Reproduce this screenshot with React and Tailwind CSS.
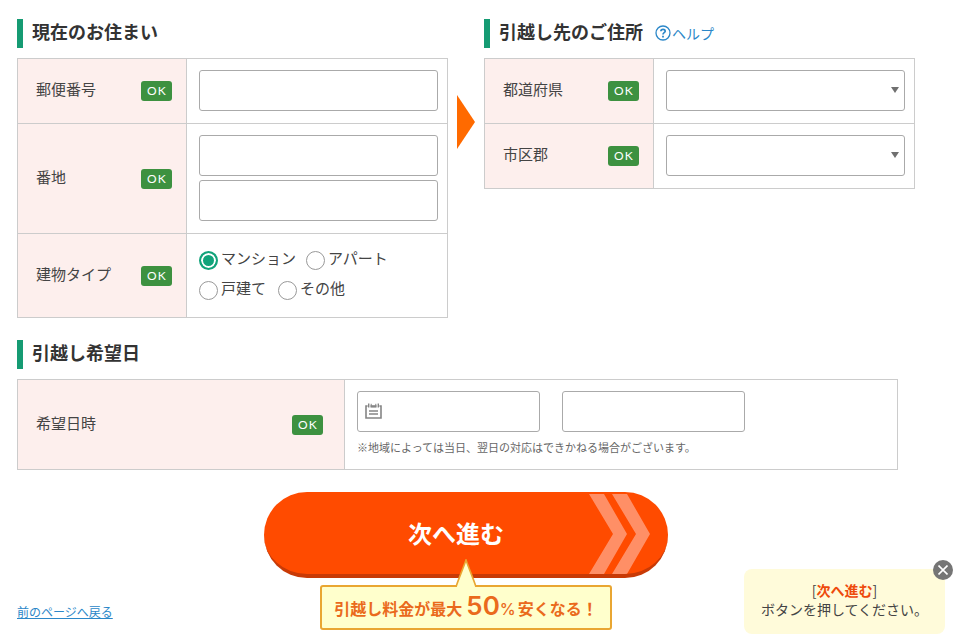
import React from "react";

const field = "block h-[41px] w-full rounded-[3px] border border-[#aaa] bg-white px-2 text-[15px] text-[#444]";

function Heading({ children }) {
  return (
    <h2 className="flex h-[29px] items-center border-l-[6px] border-[#159b73] pb-[6px] pl-[9px] text-[18px] leading-6 font-bold text-[#333]">
      {children}
    </h2>
  );
}

function Badge() {
  return (
    <span className="flex h-5 w-[31px] items-center justify-center rounded-[3px] bg-[#3d9140] pl-px font-['Lato',sans-serif] text-[12px] leading-5 tracking-widest text-white">
      OK
    </span>
  );
}

function Row({ label, htmlFor, wide, children }) {
  const Label = htmlFor ? "label" : "span";
  return (
    <div className="flex border-b border-[#ccc]">
      <div
        className={
          "flex shrink-0 items-center justify-between border-r border-[#ccc] bg-[#fdefed] pl-[18px] " +
          (wide ? "w-[327px] pr-[21px]" : "w-[169px] pr-[14px]")
        }
      >
        <Label htmlFor={htmlFor} className="pb-1 text-[15px] leading-6">
          {label}
        </Label>
        <Badge />
      </div>
      <div className="min-w-0 grow pt-[11px] pr-[9px] pb-3 pl-3">{children}</div>
    </div>
  );
}

function Panel({ children }) {
  return <div className="mt-[10px] border-x border-t border-[#ccc]">{children}</div>;
}

function SelectField({ id }) {
  return (
    <div className="relative">
      <select id={id} className={field + " appearance-none"} defaultValue="">
        <option value=""></option>
      </select>
      <svg className="pointer-events-none absolute top-4 right-[6px] h-[7px] w-2" viewBox="0 0 8 7" aria-hidden="true">
        <path d="M0 1h8L4 7z" fill="#707070" />
      </svg>
    </div>
  );
}

function Radio({ label, checked }) {
  return (
    <label className="flex items-center gap-[3px] text-[15px] leading-[26px]">
      <input
        type="radio"
        name="building"
        defaultChecked={checked}
        className="size-[19px] appearance-none rounded-full border border-[#999] bg-white checked:border-2 checked:border-[#11a37a] checked:bg-[#11a37a] checked:shadow-[inset_0_0_0_2px_white]"
      />
      <span className="pb-1">{label}</span>
    </label>
  );
}

export default function App() {
  return (
    <div className="bg-white font-['Noto_Sans_CJK_JP',sans-serif] text-[#444]">
      <form className="pt-[19px] pr-[52px] pb-[10px] pl-[17px]" onSubmit={(e) => e.preventDefault()}>
        <div className="grid grid-cols-[1fr_36px_1fr]">
          <section>
            <Heading>現在のお住まい</Heading>
            <Panel>
              <Row label="郵便番号" htmlFor="zip">
                <input id="zip" type="text" className={field} />
              </Row>
              <Row label="番地" htmlFor="street">
                <div className="flex flex-col gap-1">
                  <input id="street" type="text" className={field} />
                  <input type="text" aria-label="番地" className={field} />
                </div>
              </Row>
              <Row label="建物タイプ">
                <div className="flex gap-[10px]">
                  <Radio label="マンション" checked />
                  <Radio label="アパート" />
                </div>
                <div className="flex gap-3">
                  <Radio label="戸建て" />
                  <Radio label="その他" />
                </div>
              </Row>
            </Panel>
          </section>
          <svg className="mt-[76px] h-[54px] w-[18px] justify-self-center" viewBox="0 0 18 54" aria-hidden="true">
            <path d="M0 0L18 27L0 54z" fill="#ff6a00" />
          </svg>
          <section>
            <Heading>
              引越し先のご住所
              <a href="#help" className="ml-3 flex items-center gap-px pt-1 text-[14px] leading-5 font-normal text-[#2b87c8]">
                <svg className="size-4" viewBox="0 0 16 16" fill="none" stroke="currentColor" aria-hidden="true">
                  <circle cx="8" cy="8" r="7" strokeWidth="1.3" />
                  <path d="M5.9 6.3C5.9 3.6 10.2 3.7 10.2 6.2C10.2 7.7 8 7.7 8 9.5" strokeWidth="1.7" />
                  <path d="M8 10.8v1.8" strokeWidth="1.8" />
                </svg>
                ヘルプ
              </a>
            </Heading>
            <Panel>
              <Row label="都道府県" htmlFor="pref">
                <SelectField id="pref" />
              </Row>
              <Row label="市区郡" htmlFor="city">
                <SelectField id="city" />
              </Row>
            </Panel>
          </section>
        </div>

        <section className="mt-[22px] mr-[17px]">
          <Heading>引越し希望日</Heading>
          <Panel>
            <Row label="希望日時" htmlFor="date" wide>
              <div className="flex gap-[22px]">
                <div className="relative w-[183px]">
                  <input id="date" type="text" className={field + " pl-8"} />
                  <svg className="pointer-events-none absolute top-3 left-2 h-4 w-[17px]" viewBox="0 0 17 16" fill="none" stroke="#858585" aria-hidden="true">
                    <path d="M2.6 3H1v12h15V3h-1.6" strokeWidth="1.6" />
                    <path d="M3.7 0.5v4M13.3 0.5v4" strokeWidth="1.4" />
                    <path d="M5.5 3.4h6" strokeWidth="2.4" />
                    <path d="M6.2 0.8v3M10.8 0.8v3" strokeWidth="1" />
                    <path d="M4 8h9M4 11h9" strokeWidth="1.4" />
                  </svg>
                </div>
                <input type="text" aria-label="希望時間" className={field + " max-w-[183px]"} />
              </div>
              <p className="mt-[7px] mb-px text-[11px] leading-[17px] text-[#666]">
                ※地域によっては当日、翌日の対応はできかねる場合がございます。
              </p>
            </Row>
          </Panel>
        </section>

        <div className="mt-[22px] flex justify-center">
          <button
            type="submit"
            className="relative h-[86px] w-[404px] overflow-hidden rounded-full border-b-4 border-[#c83a06] bg-[#ff4b00] pr-5 pb-px text-center text-[24px] font-bold text-white"
          >
            次へ進む
            <svg className="absolute top-[2px] right-[17px] h-20 w-[62px]" viewBox="0 0 62 80" fill="#ff8f66" aria-hidden="true">
              <path d="M0 0h15l23 40l-23 40H0l24-40z" />
              <path d="M23 0h15l23 40l-23 40H23l24-40z" />
            </svg>
          </button>
        </div>

        <div className="mt-[7px] grid grid-cols-[1fr_auto_1fr] items-center">
          <a href="#back" className="justify-self-start pt-2 text-[12px] leading-4 text-[#2b87c8] underline">
            前のページへ戻る
          </a>
          <div className="relative flex h-[45px] w-[292px] items-center justify-center rounded-[3px] border-2 border-[#e9a632] bg-[#ffc] text-[16px] leading-6 font-bold text-[#ea6a1c]">
            <svg className="absolute -top-7 left-[132px] h-7 w-6" viewBox="0 0 24 28" aria-hidden="true">
              <path d="M2 28C4 21 9 10 12 1C15 10 20 21 22 28" fill="#ffc" stroke="#e9a632" strokeWidth="1.6" />
            </svg>
            <p className="flex items-baseline">
              引越し料金が最大
              <span className="ml-1 font-['Inter',sans-serif] text-[26px] font-semibold">50</span>
              <span className="mr-[2px] font-['Inter',sans-serif] text-[16px] font-medium">%</span>
              安くなる！
            </p>
          </div>
        </div>
      </form>

      <aside className="fixed right-[22px] bottom-[6px] w-[201px] rounded-lg bg-[#fffbda] pt-3 pb-[15px] text-center text-[14px] leading-[19px]">
        <button
          type="button"
          aria-label="閉じる"
          className="absolute -top-[9px] -right-2 flex size-5 items-center justify-center rounded-full bg-[#757575]"
        >
          <svg className="size-[10px]" viewBox="0 0 10 10" stroke="#fff" strokeWidth="1.6" aria-hidden="true">
            <path d="M0.5 0.5l9 9M9.5 0.5l-9 9" />
          </svg>
        </button>
        <p>
          [<strong className="text-[#ee4a0c]">次へ進む</strong>]
        </p>
        <p>ボタンを押してください。</p>
      </aside>
    </div>
  );
}
